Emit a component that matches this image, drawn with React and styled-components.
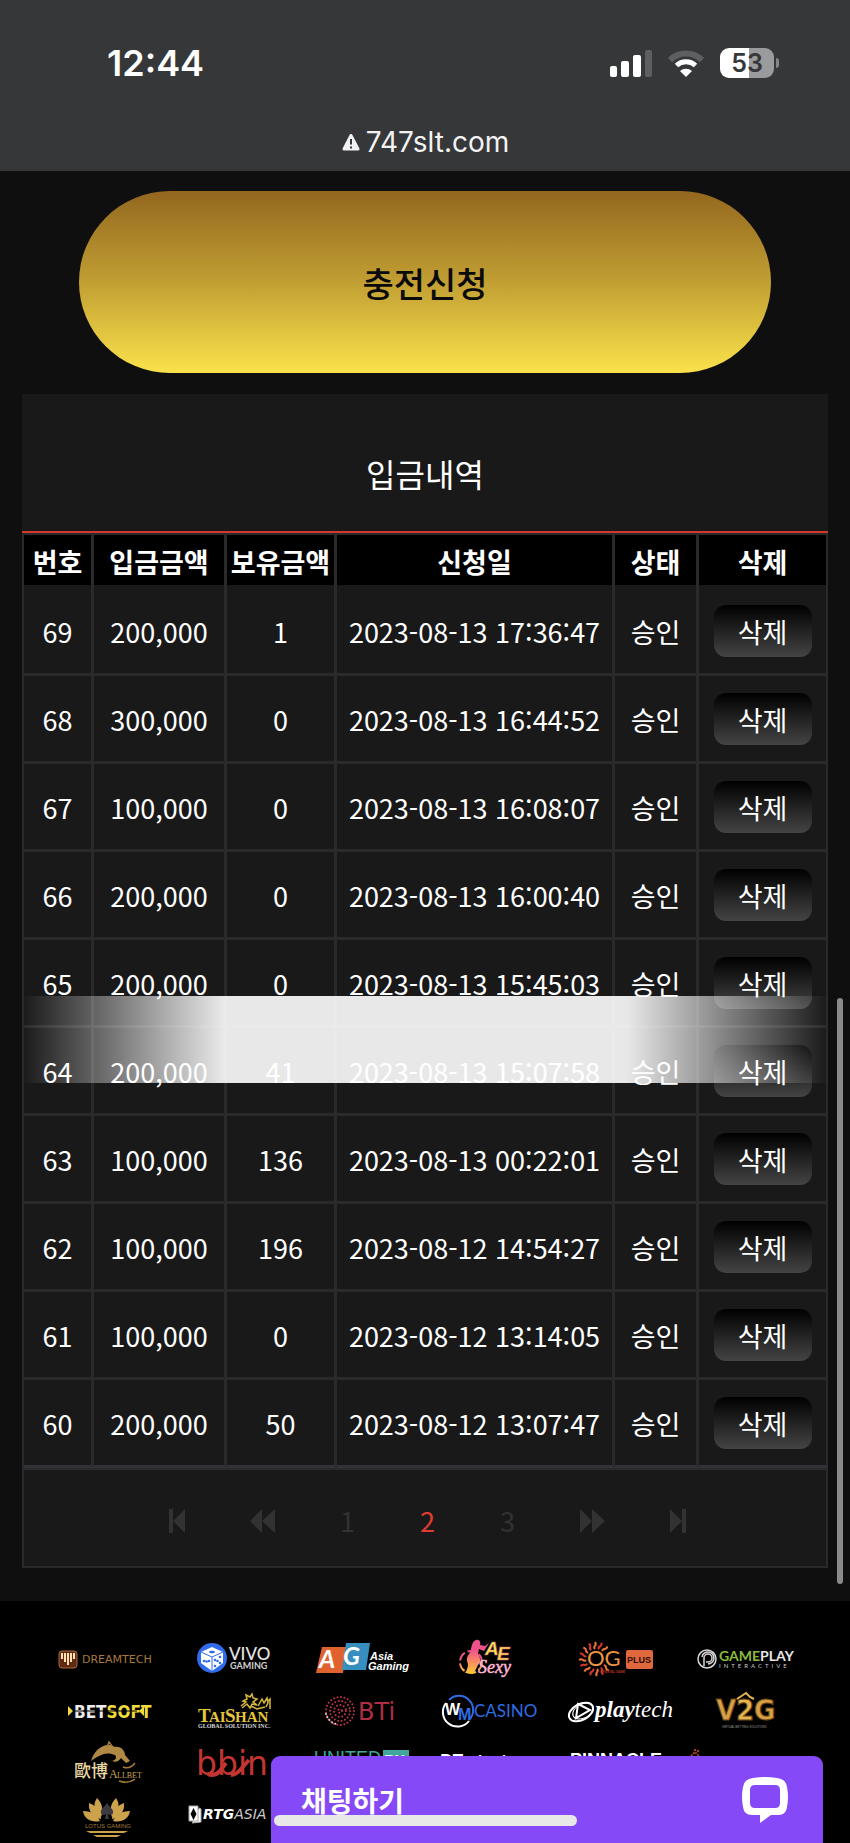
import React from 'react';
import styled, { createGlobalStyle } from 'styled-components';

const kr = `'Noto Sans CJK KR', 'Noto Sans', sans-serif`;
const ui = `Inter, 'Noto Sans', sans-serif`;

const GlobalStyle = createGlobalStyle`
    * {
        box-sizing: border-box;
    }

    body {
        margin: 0;
        background-color: #0f0f0f;
        color: #fff;
        font-family: ${kr};
    }

    button {
        padding: 0;
        border: 0;
        font-family: inherit;
        cursor: pointer;
    }
`;

const Page = styled.div`
    display: flex;
    flex-direction: column;
    height: 100vh;
    overflow: hidden;
`;

const BrowserBar = styled.header`
    flex: none;
    height: 171px;
    padding: 36px 71px 0 107px;
    background-color: #363739;
    font-family: ${ui};
`;

const StatusRow = styled.div`
    display: flex;
    align-items: center;
    justify-content: space-between;
    height: 54px;
`;

const Clock = styled.span`
    font-size: 36px;
    font-weight: 600;
    line-height: 54px;
`;

const StatusIcons = styled.div`
    display: flex;
    align-items: center;
    gap: 16px;
`;

const Battery = styled.span`
    position: relative;
    display: flex;
    align-items: center;
    justify-content: center;
    width: 54px;
    height: 30px;
    margin-right: 5px;
    border-radius: 9px;
    background: linear-gradient(to right, #fff 53%, #9a9b9d 53%);
    color: #363739;
    font-size: 25px;
    font-weight: 600;

    &::after {
        content: '';
        position: absolute;
        right: -5px;
        width: 3px;
        height: 10px;
        border-radius: 0 4px 4px 0;
        background-color: #85868a;
    }
`;

const Address = styled.div`
    display: flex;
    align-items: center;
    justify-content: center;
    gap: 6px;
    height: 36px;
    margin: 34px -36px 0 -71px;
    font-size: 28px;
    line-height: 36px;
    color: #f2f2f2;
`;

const Main = styled.main`
    flex: none;
    padding: 20px 22px 33px;
`;

const DepositButton = styled.button`
    display: block;
    width: calc(100% - 114px);
    height: 182px;
    margin: 0 auto 21px;
    border-radius: 91px;
    background: linear-gradient(#93671f, #c19f33 50%, #fbe24b);
    color: #0a0a0a;
    font-size: 34px;
    font-weight: 500;
`;

const Panel = styled.section`
    position: relative;
    background-color: #191919;
`;

const PanelTitle = styled.h2`
    margin: 0;
    padding-top: 24px;
    height: 139px;
    border-bottom: 2px solid #d6392c;
    font-size: 32px;
    font-weight: 400;
    line-height: 110px;
    text-align: center;
`;

const Table = styled.table`
    width: 100%;
    table-layout: fixed;
    border-collapse: separate;
    border-spacing: 0;
    border: 2px solid #2a2a2a;
    border-right: 0;
    border-bottom: 0;
    font-size: 27px;
    text-align: center;
`;

const Col = styled.col`
    width: ${({ $width }) => $width || 'auto'};
`;

const HeadCell = styled.th`
    height: 53px;
    padding: 0;
    border-right: 3px solid #2a2a2a;
    background: linear-gradient(#000 50px, #191919 50px);
    background-clip: padding-box;
    font-weight: 700;
    line-height: 50px;
    white-space: nowrap;

    &:last-child {
        border-right-width: 2px;
    }
`;

const Cell = styled.td`
    height: 88px;
    padding: 3px 0 0;
    border-right: 3px solid #2a2a2a;
    border-bottom: 3px solid #2a2a2a;
    line-height: 40px;
    white-space: nowrap;

    &:last-child {
        padding-top: 0;
        border-right-width: 2px;
    }

    tr:last-child > & {
        border-bottom-color: #323137;
    }
`;

const DeleteButton = styled.button`
    display: block;
    width: 98px;
    height: 52px;
    margin: 0 auto;
    border-radius: 12px;
    background: linear-gradient(#000, #444);
    color: #fff;
    font-size: 27px;
    font-weight: 400;
    line-height: 54px;
`;

const Pagination = styled.nav`
    display: flex;
    align-items: center;
    justify-content: center;
    gap: 65px;
    height: 100px;
    padding: 5px 0 0 5px;
    border: 2px solid #2a2a2a;
`;

const PageLink = styled.a`
    display: flex;
    color: ${({ $active }) => ($active ? '#e23b30' : '#323232')};
    font-size: 27px;
    line-height: 40px;
    text-decoration: none;
`;

const Shine = styled.div`
    position: absolute;
    top: 602px;
    left: 0;
    right: 0;
    height: 87px;
    background: linear-gradient(
        to right,
        rgba(255, 255, 255, 0),
        rgba(255, 255, 255, 0.9) 25%,
        rgba(255, 255, 255, 0.9) 75%,
        rgba(255, 255, 255, 0)
    );
    pointer-events: none;
`;

const Partners = styled.footer`
    flex: 1;
    display: grid;
    grid-template-columns: repeat(6, 1fr);
    grid-auto-rows: 52px;
    justify-items: center;
    align-items: center;
    padding: 32px 41px 0;
    background-color: #000;
`;

const Logo = styled.svg`
    display: block;
    width: 120px;
    height: 48px;
    overflow: visible;
`;

const ScrollThumb = styled.div`
    position: fixed;
    top: 998px;
    right: 7px;
    width: 6px;
    height: 586px;
    border-radius: 3px;
    background-color: #8a8a8a;
`;

const ChatBar = styled.button`
    position: fixed;
    right: 27px;
    bottom: 0;
    display: flex;
    align-items: center;
    justify-content: space-between;
    width: 552px;
    height: 87px;
    padding: 0 35px 0 30px;
    border-radius: 9px 9px 0 0;
    background-color: #8549f7;
    color: #fff;
    font-size: 28px;
    font-weight: 700;
    line-height: 40px;
`;

const HomeIndicator = styled.div`
    position: fixed;
    left: 50%;
    bottom: 17px;
    width: 303px;
    height: 11px;
    margin-left: -151px;
    border-radius: 6px;
    background-color: #e8e8e8;
`;

const deposits = [
    { no: 69, amount: '200,000', balance: 1, date: '2023-08-13 17:36:47' },
    { no: 68, amount: '300,000', balance: 0, date: '2023-08-13 16:44:52' },
    { no: 67, amount: '100,000', balance: 0, date: '2023-08-13 16:08:07' },
    { no: 66, amount: '200,000', balance: 0, date: '2023-08-13 16:00:40' },
    { no: 65, amount: '200,000', balance: 0, date: '2023-08-13 15:45:03' },
    { no: 64, amount: '200,000', balance: 41, date: '2023-08-13 15:07:58' },
    { no: 63, amount: '100,000', balance: 136, date: '2023-08-13 00:22:01' },
    { no: 62, amount: '100,000', balance: 196, date: '2023-08-12 14:54:27' },
    { no: 61, amount: '100,000', balance: 0, date: '2023-08-12 13:14:05' },
    { no: 60, amount: '200,000', balance: 50, date: '2023-08-12 13:07:47' },
];

const sans = 'Liberation Sans';
const serif = 'Liberation Serif';

const DreamTech = () => (
    <Logo viewBox="-60 -24 120 48" role="img">
        <rect x="-46" y="-8" width="18" height="17" rx="3" fill="#5e2a14" stroke="#a8683a" />
        <path d="M-43 -6v6M-40 -6v9M-37 -6v12M-34 -6v9M-31 -6v6" stroke="#ffe2b0" strokeWidth="2" />
        <text x="-23" y="4" fontFamily="DejaVu Sans" fontSize="11" fill="#a8783c">DREAMTECH</text>
    </Logo>
);

const Vivo = () => (
    <Logo viewBox="-60 -24 120 48" role="img">
        <circle cx="-21" cy="-1" r="15" fill="#2f6bea" />
        <path d="M-21 -12l11 5v11l-11 8l-11 -8v-11z" fill="#fff" />
        <path d="M-32 -7l11 5l11 -5M-21 -2v14" stroke="#2f6bea" fill="none" />
        <g fill="#2f6bea">
            <ellipse cx="-21" cy="-7" rx="3" ry="1.300" />
            <circle cx="-29" cy="2" r="1.300" />
            <circle cx="-26.500" cy="2.500" r="1.300" />
            <circle cx="-24" cy="2" r="1.300" />
            <circle cx="-18" cy="1" r="1.300" />
            <circle cx="-13" cy="-2" r="1.300" />
            <circle cx="-15.500" cy="2" r="1.300" />
            <circle cx="-18" cy="7" r="1.300" />
            <circle cx="-13" cy="4" r="1.300" />
        </g>
        <text x="-4" y="1" fontFamily="Lato" fontSize="17" fontWeight="500" fill="#e4e4e4">VIVO</text>
        <text x="-3" y="10" fontFamily="Lato" fontSize="9" fontWeight="700" fill="#d0d0d0">GAMING</text>
    </Logo>
);

const AsiaGaming = () => (
    <Logo viewBox="-60 -24 120 48" role="img">
        <path d="M-39 -12h25l-4 26h-27z" fill="#e0632f" />
        <path d="M-15 -16h24l-4 27h-24z" fill="#378fc0" />
        <text x="-42" y="9" fontFamily="Lato" fontSize="25" fontWeight="700" fontStyle="italic" fill="#fff">A</text>
        <text x="-18" y="6" fontFamily="Lato" fontSize="25" fontWeight="700" fontStyle="italic" fill="#fff">G</text>
        <text x="9" y="1" fontFamily={sans} fontSize="11" fontWeight="700" fontStyle="italic" fill="#fff">Asia</text>
        <text x="7" y="11" fontFamily={sans} fontSize="11" fontWeight="700" fontStyle="italic" fill="#fff">Gaming</text>
    </Logo>
);

const AeSexy = () => (
    <Logo viewBox="-60 -24 120 48" role="img">
        <defs>
            <linearGradient id="ae" x1="0" y1="0" x2="0" y2="1">
                <stop offset="0.300" stopColor="#f0508c" />
                <stop offset="1" stopColor="#ffc637" />
            </linearGradient>
        </defs>
        <circle cx="-18" cy="3" r="11" fill="none" stroke="url(#ae)" strokeWidth="2" strokeDasharray="9 3" />
        <path d="M-13 -19c4 -1 5 3 4 5l5 1l4 -3l-5 8l-5 -2l-1 5c3 5 3 8 0 11l-4 8l-9 0c4 -6 3 -9 2 -12c-1 -5 4 -8 4 -12c1 -5 2 -8 5 -9z" fill="url(#ae)" />
        <text x="-4" y="-4" fontFamily={sans} fontSize="19" fontWeight="700" fontStyle="italic" fill="#f7e94a" stroke="#d0508a" strokeWidth="0.500">A</text>
        <text x="8" y="1" fontFamily={sans} fontSize="19" fontWeight="700" fontStyle="italic" fill="#f7d94a" stroke="#d0508a" strokeWidth="0.500">E</text>
        <text x="-11" y="14" fontFamily={serif} fontSize="18" fontStyle="italic" fill="#ffb4d4" stroke="#ffb4d4" strokeWidth="0.500">Sexy</text>
    </Logo>
);

const OgPlus = () => (
    <Logo viewBox="-60 -24 120 48" role="img">
        <g fill="none" strokeWidth="2" transform="translate(-21 0)">
            {[45, 68, 90, 112, 135, 158, 180, 202, 225, 248, 270, 292, 315].map((angle, i) => (
                <path
                    key={angle}
                    d="M10 -1c3 -3 3 3 7 0"
                    stroke={i % 2 ? '#d8352c' : '#e8743a'}
                    transform={`rotate(${angle})`}
                />
            ))}
        </g>
        <text x="-30" y="7" fontFamily="Lato" fontSize="22" fill="#ee9640">OG</text>
        <rect x="9" y="-9" width="27" height="19" rx="2" fill="#e0683c" />
        <text x="10" y="4" fontFamily={sans} fontSize="9" fontWeight="700" fill="#2a0e08">PLUS</text>
        <text x="-17" y="14" fontFamily={sans} fontSize="3" fontWeight="700" fill="#b8321e">ORIENTAL GAME</text>
    </Logo>
);

const GamePlay = () => (
    <Logo viewBox="-60 -24 120 48" role="img">
        <circle cx="-38" cy="0" r="9" fill="none" stroke="#d8d8d8" strokeWidth="1.500" />
        <path d="M-41 7v-8a4 4 0 1 1 4 4h-2M-43 -2a6 6 0 1 1 6 7" fill="none" stroke="#d8d8d8" strokeWidth="1.500" />
        <text x="-26" y="2" fontFamily="Lato" fontSize="14" fontWeight="700" fill="#8bb83c">
            GAME<tspan fill="#e8e8e8">PLAY</tspan>
        </text>
        <text x="-26" y="9" fontFamily="Lato" fontSize="6" fill="#ccc" letterSpacing="3">INTERACTIVE</text>
    </Logo>
);

const BetSoft = () => (
    <Logo viewBox="-60 -24 120 48" role="img">
        <path d="M-37 -5l5 5l-5 5zM39 -5l-5 5l5 5z" fill="#f0dc3c" />
        <text x="-31" y="7" fontFamily="Liberation Sans Narrow, DejaVu Sans Condensed" fontSize="17" fontWeight="700" fill="#ececec">
            BET<tspan fill="#f0dc3c">SOFT</tspan>
        </text>
        <path d="M-30 0h62" stroke="#000" />
    </Logo>
);

const TaiShan = () => (
    <Logo viewBox="-60 -24 120 48" role="img">
        <path d="M8 -5l5 -4l-3 -1l4 -2l-1 -4l4 2l2 -3l1 4l4 1l-4 3l4 3l-5 -1l-2 4l-3 -4l-5 4M25 -5l4 -7l2 4l3 -5l1 5l-2 4M35 -10l2 -2v10M18 -5l6 3l8 -2" fill="none" stroke="#d8b83c" strokeWidth="1.500" />
        <text x="-35" y="11" fontFamily={serif} fontSize="19" fontWeight="700" fill="#e4c53c">T</text>
        <text x="-24" y="11" fontFamily={serif} fontSize="15" fontWeight="700" fill="#e4c53c">AI</text>
        <text x="-8" y="11" fontFamily={serif} fontSize="19" fontWeight="700" fill="#e4c53c">S</text>
        <text x="2" y="11" fontFamily={serif} fontSize="15" fontWeight="700" fill="#e4c53c">HAN</text>
        <text x="-35" y="17" fontFamily={serif} fontSize="6" fontWeight="700" fill="#d8d8d8">GLOBAL SOLUTION INC.</text>
    </Logo>
);

const Bti = () => (
    <Logo viewBox="-60 -24 120 48" role="img">
        <g fill="none" stroke="#c0354c" strokeWidth="2" strokeLinecap="round" strokeDasharray="0 3.500">
            <circle cx="-21" cy="0" r="14" />
            <circle cx="-21" cy="0" r="10" />
            <circle cx="-21" cy="0" r="6" />
            <circle cx="-21" cy="0" r="2" />
            <path d="M-35 3a14 14 0 0 0 10 10" stroke="#f0d0d4" />
        </g>
        <text x="-3" y="9" fontFamily="DejaVu Sans" fontSize="24" fill="#b02e44">BTi</text>
    </Logo>
);

const WmCasino = () => (
    <Logo viewBox="-60 -24 120 48" role="img">
        <path d="M-43 -8a14 14 0 1 0 23 18" fill="none" stroke="#fff" strokeWidth="2" />
        <path d="M-40 -11a14 14 0 0 1 20 20" fill="none" stroke="#2f6be0" strokeWidth="2" />
        <text x="-44" y="4" fontFamily={sans} fontSize="16" fontWeight="700" fill="#fff">W</text>
        <text x="-31" y="9" fontFamily={sans} fontSize="16" fontWeight="700" fill="#2f6be0">M</text>
        <text x="-15" y="6" fontFamily="Lato" fontSize="17" fill="#2f6be0">CASINO</text>
    </Logo>
);

const Playtech = () => (
    <Logo viewBox="-60 -24 120 48" role="img">
        <ellipse cx="-36" cy="1" rx="13" ry="8" fill="none" stroke="#fff" strokeWidth="2" transform="rotate(-28 -36 1)" />
        <ellipse cx="-34" cy="0" rx="11" ry="7" fill="none" stroke="#fff" transform="rotate(-28 -34 0)" />
        <path d="M-39 -7l12 6l-14 8z" fill="#000" stroke="#fff" strokeWidth="2" />
        <text x="-22" y="6" fontFamily={serif} fontSize="23" fontWeight="700" fontStyle="italic" fill="#fff">
            play<tspan fontWeight="400">tech</tspan>
        </text>
    </Logo>
);

const V2g = () => (
    <Logo viewBox="-60 -24 120 48" role="img">
        <g fontFamily="DejaVu Sans Condensed, DejaVu Sans" fontSize="29" fontWeight="700" fill="#d8a044" stroke="#6a4412">
            <text x="-29" y="9">V</text>
            <text x="-9" y="9" fill="#e4b450">2</text>
            <text x="9" y="9">G</text>
        </g>
        <path d="M-8 -12l6 -4l3 -2l4 4l4 2" fill="none" stroke="#e4b450" strokeWidth="2" />
        <text x="-23" y="17" fontFamily={sans} fontSize="3" fill="#999">VIRTUAL BETTING SOLUTIONS</text>
    </Logo>
);

const AllBet = () => (
    <Logo viewBox="-60 -24 120 48" role="img">
        <path d="M-14 -2c3 -12 15 -20 24 -14c6 -1 10 4 10 8l5 6l-4 2l-5 -5c-2 3 -5 5 -9 3c4 -1 5 -4 3 -6c-8 -4 -16 0 -24 6z" fill="#b08a44" />
        <path d="M2 -16l2 -5l3 4M18 4c5 2 9 0 12 -4M14 18c6 2 12 1 16 -2" fill="none" stroke="#a07a38" strokeWidth="1.500" />
        <text x="-31" y="14" fontFamily="Noto Sans CJK TC" fontSize="17" fontWeight="500" fill="#ead9a4">歐博</text>
        <text x="4" y="15" fontFamily={serif} fontSize="12" fill="#c8a458">A</text>
        <text x="12" y="15" fontFamily={serif} fontSize="8" fill="#c8a458">LLBET</text>
    </Logo>
);

const Bbin = () => (
    <Logo viewBox="-60 -24 120 48" role="img">
        <text x="-37" y="12" fontFamily="DejaVu Sans" fontSize="33" fill="#c23530">bbin</text>
        <path d="M-25 11q6 3 12 -3l6 -8M-2 12q5 0 10 -6l8 -9" fill="none" stroke="#c23530" strokeWidth="4" />
    </Logo>
);

const United = () => (
    <Logo viewBox="-60 -24 120 48" role="img">
        <text x="-47" y="1" fontFamily={sans} fontSize="18" fill="#42a69e">UNITED</text>
        <rect x="22" y="-13" width="26" height="17" fill="#42a69e" />
        <text x="23" y="2" fontFamily={sans} fontSize="15" fontWeight="700" fill="#e8f4f2">RX</text>
    </Logo>
);

const Robotics = () => (
    <Logo viewBox="-60 -24 120 48" role="img">
        <text x="-50" y="5" fontFamily="Lato" fontSize="19" fontWeight="700" fontStyle="italic" fill="#fff">
            DT<tspan fontSize="17">robotics</tspan>
        </text>
    </Logo>
);

const Pinnacle = () => (
    <Logo viewBox="-60 -24 120 48" role="img">
        <text x="-47" y="3" fontFamily={sans} fontSize="18" fontWeight="700" fill="#fff">PINNACLE</text>
    </Logo>
);

const Ember = () => (
    <Logo viewBox="-60 -24 120 48" role="img">
        <path d="M-54 -7l4 -4l4 4M-51 -13h2M-48 -12h2" stroke="#a8402c" strokeWidth="2" fill="none" strokeDasharray="2 1" />
    </Logo>
);

const Lotus = () => (
    <Logo viewBox="-60 -24 120 48" role="img">
        <g fill="#cda24c">
            <path d="M-8 -17c5 5 7 12 4 19c-6 -4 -9 -12 -4 -19zM11 -17c-5 5 -7 12 -4 19c6 -4 9 -12 4 -19z" />
            <path d="M-16 -12c8 3 12 9 12 16c-8 -1 -13 -8 -12 -16zM19 -12c-8 3 -12 9 -12 16c8 -1 13 -8 12 -16z" />
            <path d="M-22 -4c9 0 14 4 17 10c-8 2 -16 -2 -17 -10zM25 -4c-9 0 -14 4 -17 10c8 2 16 -2 17 -10z" />
            <path d="M-19 16h42l-4 2h-34zM-12 20h28l-4 2h-20z" />
        </g>
        <path d="M2 -12c3 5 7 6 6 10c-1 3 -4 2 -5 1l1 5h-4l1 -5c-1 1 -4 2 -5 -1c-1 -4 3 -5 6 -10z" fill="#3a3a40" />
        <text x="-20" y="13" fontFamily={sans} fontSize="6" fill="#a07c3c">LOTUS GAMING</text>
    </Logo>
);

const RtgAsia = () => (
    <Logo viewBox="-60 -24 120 48" role="img">
        <path d="M-44 -9h9v15h-9zM-34 -7l2 1v13l-9 1" fill="#fff" stroke="#aaa" />
        <path d="M-39.500 -7l3 6l-3 6l-3 -6z" fill="#000" />
        <text x="-30" y="4" fontFamily="DejaVu Sans" fontSize="14" fontWeight="700" fontStyle="italic" fill="#fff">
            RTG<tspan fontWeight="400" fill="#ccc">ASIA</tspan>
        </text>
    </Logo>
);

const logos = [
    DreamTech, Vivo, AsiaGaming, AeSexy, OgPlus, GamePlay,
    BetSoft, TaiShan, Bti, WmCasino, Playtech, V2g,
    AllBet, Bbin, United, Robotics, Pinnacle, Ember,
    Lotus, RtgAsia,
];

const SignalIcon = () => (
    <svg width="42" height="27" viewBox="0 0 42 27">
        <g fill="#fff">
            <rect x="0" y="16" width="7" height="11" rx="2" />
            <rect x="11" y="11" width="8" height="16" rx="2" />
            <rect x="23" y="5" width="8" height="22" rx="2" />
        </g>
        <rect x="35" y="0" width="7" height="27" rx="2" fill="#5e5f61" />
    </svg>
);

const WifiIcon = () => (
    <svg width="36" height="27" viewBox="0 0 36 27">
        <path d="M2 10a23 23 0 0 1 32 0" fill="none" stroke="#5e5f61" strokeWidth="6" />
        <path d="M8.500 15.500a14 14 0 0 1 19 0" fill="none" stroke="#fff" strokeWidth="5" />
        <path d="M12 21a9 9 0 0 1 12 0l-6 6z" fill="#fff" />
    </svg>
);

const WarningIcon = () => (
    <svg width="18" height="17" viewBox="0 0 18 17">
        <path d="M9 1.500l7 13.500h-14z" fill="#f2f2f2" stroke="#f2f2f2" strokeWidth="3" strokeLinejoin="round" />
        <path d="M9 5v5.500M9 12.500v2" stroke="#363739" strokeWidth="2" />
    </svg>
);

const ChatIcon = () => (
    <svg width="46" height="46" viewBox="0 0 46 46">
        <path
            fill="#fff"
            fillRule="evenodd"
            d="M11 1Q23 -1 35 1Q44 2 45 10Q47 20 45 30Q44 38 36 38L29 38L18 46V31H33Q38 31 38 26V13Q38 8 33 8H13Q8 8 8 13V26Q8 31 13 31H18V38H10Q2 38 1 30Q-1 20 1 10Q2 2 11 1Z"
        />
    </svg>
);

const arrows = {
    first: { width: 16, d: 'M0 0h4v24h-4zM16 0v24l-12 -12z' },
    prev: { width: 25, d: 'M12 0v24l-12 -12zM25 0v24l-13 -12z' },
    next: { width: 25, d: 'M0 0v24l12 -12zM12 0v24l13 -12z' },
    last: { width: 16, d: 'M12 0h4v24h-4zM0 0v24l12 -12z' },
};

const ArrowLink = ({ name, label }) => (
    <PageLink href="#" aria-label={label}>
        <svg width={arrows[name].width} height="24" fill="currentColor">
            <path d={arrows[name].d} />
        </svg>
    </PageLink>
);

const App = () => {
    return (
        <Page lang="ko">
            <GlobalStyle />
            <BrowserBar>
                <StatusRow>
                    <Clock>12:44</Clock>
                    <StatusIcons>
                        <SignalIcon />
                        <WifiIcon />
                        <Battery>53</Battery>
                    </StatusIcons>
                </StatusRow>
                <Address>
                    <WarningIcon />
                    <span>747slt.com</span>
                </Address>
            </BrowserBar>
            <Main>
                <DepositButton type="button">충전신청</DepositButton>
                <Panel>
                    <PanelTitle>입금내역</PanelTitle>
                    <Table>
                        <colgroup>
                            <Col $width="70px" />
                            <Col $width="133px" />
                            <Col $width="110px" />
                            <Col />
                            <Col $width="84px" />
                            <Col $width="129px" />
                        </colgroup>
                        <thead>
                            <tr>
                                <HeadCell>번호</HeadCell>
                                <HeadCell>입금금액</HeadCell>
                                <HeadCell>보유금액</HeadCell>
                                <HeadCell>신청일</HeadCell>
                                <HeadCell>상태</HeadCell>
                                <HeadCell>삭제</HeadCell>
                            </tr>
                        </thead>
                        <tbody>
                            {deposits.map((item) => (
                                <tr key={item.no}>
                                    <Cell>{item.no}</Cell>
                                    <Cell>{item.amount}</Cell>
                                    <Cell>{item.balance}</Cell>
                                    <Cell>{item.date}</Cell>
                                    <Cell>승인</Cell>
                                    <Cell>
                                        <DeleteButton type="button">삭제</DeleteButton>
                                    </Cell>
                                </tr>
                            ))}
                        </tbody>
                    </Table>
                    <Pagination>
                        <ArrowLink name="first" label="처음" />
                        <ArrowLink name="prev" label="이전" />
                        <PageLink href="#">1</PageLink>
                        <PageLink href="#" $active>2</PageLink>
                        <PageLink href="#">3</PageLink>
                        <ArrowLink name="next" label="다음" />
                        <ArrowLink name="last" label="마지막" />
                    </Pagination>
                    <Shine />
                </Panel>
            </Main>
            <Partners>
                {logos.map((Item, i) => <Item key={i} />)}
            </Partners>
            <ScrollThumb />
            <ChatBar type="button">
                <span>채팅하기</span>
                <ChatIcon />
            </ChatBar>
            <HomeIndicator />
        </Page>
    );
}

export default App;
